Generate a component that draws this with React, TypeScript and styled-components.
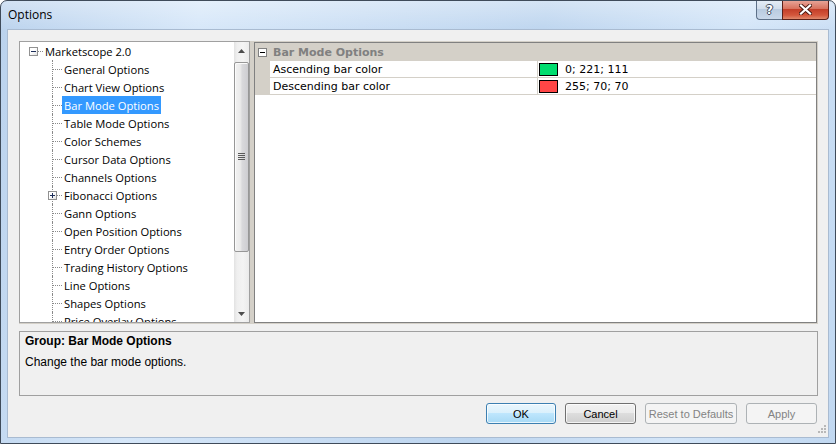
import React from "react";
import styled, { createGlobalStyle } from "styled-components";

const GlobalStyle = createGlobalStyle`
  *, *::before, *::after { box-sizing: border-box; }
  html, body { margin: 0; padding: 0; }
  body { width: 836px; height: 444px; overflow: hidden; background: #ffffff; }
`;

const Window = styled.div`
  width: 836px;
  height: 444px;
  display: flex;
  flex-direction: column;
  border: 1px solid #3f4b5a;
  border-radius: 7px 7px 0 0;
  overflow: hidden;
  background:
    linear-gradient(180deg, rgba(255, 255, 255, 0.35) 0px, rgba(255, 255, 255, 0) 30px),
    linear-gradient(100deg, #bad2ed 0%, #d6e7f9 22%, #cadef4 40%, #bdd5ef 60%, #d3e5f8 82%, #c1d8f1 100%);
`;

const TitleBar = styled.div`
  height: 29px;
  flex: none;
  display: flex;
  align-items: flex-start;
`;

const Title = styled.div`
  flex: 1;
  padding: 6px 0 0 7px;
  font-family: "Open Sans", "Noto Sans", sans-serif;
  font-size: 12px;
  line-height: 16px;
  color: #000;
`;

const CaptionButtons = styled.div`
  display: flex;
  margin: -1px 6px 0 0;
`;

const HelpButton = styled.div`
  width: 26px;
  height: 20px;
  border: 1px solid #5d7088;
  border-top: none;
  border-right: none;
  border-radius: 0 0 0 4px;
  background: linear-gradient(180deg, #e6eef7 0%, #d2deec 45%, #b9cbe0 50%, #c9d8ea 100%);
  display: flex;
  align-items: center;
  justify-content: center;
  font-family: "DejaVu Sans", sans-serif;
  font-weight: bold;
  font-size: 12px;
  color: #fff;
  text-shadow: 1px 0 0 #3d4b5e, -1px 0 0 #3d4b5e, 0 1px 0 #3d4b5e, 0 -1px 0 #3d4b5e;
`;

const CloseButton = styled.div`
  width: 47px;
  height: 20px;
  border: 1px solid #5b2018;
  border-top: none;
  border-radius: 0 0 4px 0;
  background: linear-gradient(180deg, #e9a99d 0%, #d8735f 45%, #c43f29 50%, #d4573c 80%, #e08a6d 100%);
  display: flex;
  align-items: center;
  justify-content: center;
`;

const Client = styled.div`
  flex: 1;
  margin: 0 7px 6px 7px;
  padding: 11px 10px 13px 11px;
  background: #f0f0f0;
  box-shadow: 0 0 0 1px #a9bbd1;
  display: flex;
  flex-direction: column;
  gap: 7px;
  position: relative;
`;

const TopRow = styled.div`
  height: 283px;
  flex: none;
  display: flex;
  align-items: flex-start;
  gap: 4px;
  padding-right: 1px;
  background: #d4d0c8;
`;

/* ---------- Tree ---------- */

const TreeBox = styled.div`
  width: 231px;
  height: 282px;
  flex: none;
  border: 1px solid #a0a0a0;
  background: #fff;
  display: flex;
`;

const TreeList = styled.div`
  flex: 1;
  overflow: hidden;
`;

const TreeRow = styled.div<{ $indent: number }>`
  height: 18px;
  display: flex;
  align-items: stretch;
  padding-left: ${(p) => p.$indent}px;
  font-family: "Open Sans", "Noto Sans", sans-serif;
  font-size: 11.2px;
  color: #000;
  white-space: nowrap;
`;

const ExpanderBox = styled.span<{ $plus?: boolean }>`
  width: 9px;
  height: 9px;
  border: 1px solid #919191;
  background: linear-gradient(135deg, #ffffff 40%, #e2e2e2 100%);
  position: relative;
  flex: none;
  &::before {
    content: "";
    position: absolute;
    left: 1px;
    top: 3px;
    width: 5px;
    height: 1px;
    background: #1c2e5a;
  }
  &::after {
    content: "";
    display: ${(p) => (p.$plus ? "block" : "none")};
    position: absolute;
    left: 3px;
    top: 1px;
    width: 1px;
    height: 5px;
    background: #1c2e5a;
  }
`;

const RootExpander = styled.span`
  display: flex;
  align-items: center;
  margin-top: 1px;
`;

const RootStub = styled.span`
  width: 5px;
  height: 1px;
  margin-top: 1px;
  align-self: center;
  border-top: 1px dotted #8a8a8a;
`;

const Connector = styled.span`
  width: 19px;
  flex: none;
  position: relative;
  &::before {
    content: "";
    position: absolute;
    left: 9px;
    top: 0;
    bottom: 0;
    border-left: 1px dotted #8a8a8a;
  }
  &::after {
    content: "";
    position: absolute;
    left: 10px;
    top: 9px;
    width: 9px;
    border-top: 1px dotted #8a8a8a;
  }
`;

const ConnectorExpander = styled.span`
  position: absolute;
  left: 5px;
  top: 5px;
  z-index: 1;
  display: flex;
`;

const Label = styled.span<{ $selected?: boolean }>`
  display: flex;
  align-items: center;
  padding: 0 2px;
  background: ${(p) => (p.$selected ? "#3399ff" : "transparent")};
  color: ${(p) => (p.$selected ? "#fff" : "#000")};
`;

const ScrollBar = styled.div`
  width: 15px;
  flex: none;
  display: flex;
  flex-direction: column;
  background: linear-gradient(90deg, #e2e2e2 0%, #efefef 20%, #f4f4f4 60%, #ebebeb 100%);
`;

const ArrowButton = styled.div`
  height: 17px;
  flex: none;
  display: flex;
  align-items: center;
  justify-content: center;
`;

const Track = styled.div`
  flex: 1;
  display: flex;
  flex-direction: column;
`;

const Thumb = styled.div<{ $top: number; $height: number }>`
  margin-top: ${(p) => p.$top}px;
  height: ${(p) => p.$height}px;
  border: 1px solid #979797;
  border-radius: 2px;
  background: linear-gradient(90deg, #f2f2f2 0%, #ebebeb 40%, #d9d9dc 55%, #cdcdd1 100%);
  box-shadow: inset 1px 1px 0 #fbfbfb;
  display: flex;
  align-items: center;
  justify-content: center;
`;

/* ---------- Property grid ---------- */

const Grid = styled.div`
  flex: 1;
  height: 281px;
  margin-top: 1px;
  border: 1px solid #808080;
  background: #fff;
  display: flex;
  flex-direction: column;
  font-family: "DejaVu Sans", sans-serif;
  font-size: 11px;
  color: #000;
`;

const GridHeader = styled.div`
  height: 18px;
  flex: none;
  background: #d4d0c8;
  display: flex;
  align-items: center;
  padding-left: 3px;
  gap: 6px;
  font-weight: bold;
  color: #808080;
`;

const HeaderBox = styled.span`
  width: 9px;
  height: 9px;
  border: 1px solid #808080;
  background: #fff;
  position: relative;
  &::before {
    content: "";
    position: absolute;
    left: 1px;
    top: 3px;
    width: 5px;
    height: 1px;
    background: #000;
  }
`;

const GridRow = styled.div`
  height: 17px;
  flex: none;
  display: flex;
`;

const Gutter = styled.div`
  width: 15px;
  flex: none;
  background: #d4d0c8;
`;

const NameCell = styled.div`
  width: 268px;
  flex: none;
  padding-left: 3px;
  display: flex;
  align-items: center;
  border-right: 1px solid #d4d0c8;
  border-bottom: 1px solid #d4d0c8;
  white-space: nowrap;
`;

const ValueCell = styled.div`
  flex: 1;
  padding-left: 1px;
  display: flex;
  align-items: center;
  border-bottom: 1px solid #d4d0c8;
`;

const Swatch = styled.span<{ $color: string }>`
  width: 19px;
  height: 13px;
  flex: none;
  border: 1px solid #000;
  background: ${(p) => p.$color};
`;

const ValueText = styled.span`
  margin-left: 7px;
  width: 65px;
  overflow: hidden;
  white-space: nowrap;
`;

/* ---------- Description ---------- */

const DescPanel = styled.div`
  height: 65px;
  flex: none;
  border: 1px solid #a0a0a0;
  padding: 2px 5px 0 5px;
  font-family: "Liberation Sans", Arial, sans-serif;
  font-size: 12px;
  line-height: 14px;
  color: #000;
`;

const DescTitle = styled.div`
  font-weight: bold;
`;

const DescText = styled.div`
  margin-top: 7px;
`;

/* ---------- Buttons ---------- */

const ButtonRow = styled.div`
  height: 21px;
  flex: none;
  display: flex;
  justify-content: flex-end;
  gap: 9px;
  padding-right: 1px;
`;

type Variant = "default" | "normal" | "disabled";

const Button = styled.button<{ $w: number; $variant: Variant }>`
  width: ${(p) => p.$w}px;
  height: 21px;
  padding: 0;
  font-family: "Liberation Sans", Arial, sans-serif;
  font-size: 11px;
  border-radius: 3px;
  border: 1px solid
    ${(p) => (p.$variant === "default" ? "#3c7fb1" : p.$variant === "disabled" ? "#adb2b5" : "#707070")};
  color: ${(p) => (p.$variant === "disabled" ? "#838383" : "#000")};
  background: ${(p) =>
    p.$variant === "default"
      ? "linear-gradient(180deg, #eaf6fd 0%, #d9f0fc 50%, #bee6fd 50%, #a7d9f5 100%)"
      : p.$variant === "disabled"
      ? "#f4f4f4"
      : "linear-gradient(180deg, #f2f2f2 0%, #ebebeb 50%, #dddddd 50%, #cfcfcf 100%)"};
  box-shadow: ${(p) => (p.$variant === "disabled" ? "none" : "inset 0 0 0 1px rgba(255,255,255,0.75)")};
`;

const SizeGrip = styled.svg`
  position: absolute;
  right: 2px;
  bottom: 2px;
`;

const treeItems = [
  "General Options",
  "Chart View Options",
  "Bar Mode Options",
  "Table Mode Options",
  "Color Schemes",
  "Cursor Data Options",
  "Channels Options",
  "Fibonacci Options",
  "Gann Options",
  "Open Position Options",
  "Entry Order Options",
  "Trading History Options",
  "Line Options",
  "Shapes Options",
  "Price Overlay Options",
];

const properties = [
  { name: "Ascending bar color", color: "#00dd6f", value: "0; 221; 111" },
  { name: "Descending bar color", color: "#ff4646", value: "255; 70; 70" },
];

const Triangle = ({ up }: { up: boolean }) => (
  <svg width="7" height="4" viewBox="0 0 7 4">
    <path d={up ? "M0 4 L3.5 0 L7 4 Z" : "M0 0 L3.5 4 L7 0 Z"} fill="#4d4d4d" />
  </svg>
);

export default function App() {
  return (
    <>
      <GlobalStyle />
      <Window>
        <TitleBar>
          <Title>Options</Title>
          <CaptionButtons>
            <HelpButton>?</HelpButton>
            <CloseButton>
              <svg width="13" height="11" viewBox="0 0 13 11">
                <path d="M2 1.5 L11 9.5 M11 1.5 L2 9.5" stroke="#4a1a12" strokeWidth="4" strokeLinecap="square" />
                <path d="M2 1.5 L11 9.5 M11 1.5 L2 9.5" stroke="#ffffff" strokeWidth="2.2" strokeLinecap="square" />
              </svg>
            </CloseButton>
          </CaptionButtons>
        </TitleBar>
        <Client>
          <TopRow>
            <TreeBox>
              <TreeList>
                <TreeRow $indent={9}>
                  <RootExpander>
                    <ExpanderBox />
                  </RootExpander>
                  <RootStub />
                  <Label>Marketscope 2.0</Label>
                </TreeRow>
                {treeItems.map((item) => (
                  <TreeRow key={item} $indent={23}>
                    <Connector>
                      {item === "Fibonacci Options" && (
                        <ConnectorExpander>
                          <ExpanderBox $plus />
                        </ConnectorExpander>
                      )}
                    </Connector>
                    <Label $selected={item === "Bar Mode Options"}>{item}</Label>
                  </TreeRow>
                ))}
              </TreeList>
              <ScrollBar>
                <ArrowButton>
                  <Triangle up />
                </ArrowButton>
                <Track>
                  <Thumb $top={3} $height={190}>
                    <svg width="7" height="8" viewBox="0 0 7 8">
                      {[0, 2, 4, 6].map((y) => (
                        <rect key={y} x="0" y={y} width="7" height="1" fill="#5a5a5a" />
                      ))}
                    </svg>
                  </Thumb>
                </Track>
                <ArrowButton>
                  <Triangle up={false} />
                </ArrowButton>
              </ScrollBar>
            </TreeBox>
            <Grid>
              <GridHeader>
                <HeaderBox />
                <span>Bar Mode Options</span>
              </GridHeader>
              {properties.map((p) => (
                <GridRow key={p.name}>
                  <Gutter />
                  <NameCell>{p.name}</NameCell>
                  <ValueCell>
                    <Swatch $color={p.color} />
                    <ValueText>{p.value}</ValueText>
                  </ValueCell>
                </GridRow>
              ))}
            </Grid>
          </TopRow>
          <DescPanel>
            <DescTitle>Group: Bar Mode Options</DescTitle>
            <DescText>Change the bar mode options.</DescText>
          </DescPanel>
          <ButtonRow>
            <Button $w={70} $variant="default">OK</Button>
            <Button $w={71} $variant="normal">Cancel</Button>
            <Button $w={92} $variant="disabled">Reset to Defaults</Button>
            <Button $w={71} $variant="disabled">Apply</Button>
          </ButtonRow>
          <SizeGrip width="10" height="10" viewBox="0 0 10 10">
            {[
              [8, 0],
              [8, 3],
              [5, 3],
              [8, 6],
              [5, 6],
              [2, 6],
            ].map(([x, y]) => (
              <rect key={`${x}-${y}`} x={x} y={y} width="2" height="2" fill="#b8b8b8" />
            ))}
          </SizeGrip>
        </Client>
      </Window>
    </>
  );
}
